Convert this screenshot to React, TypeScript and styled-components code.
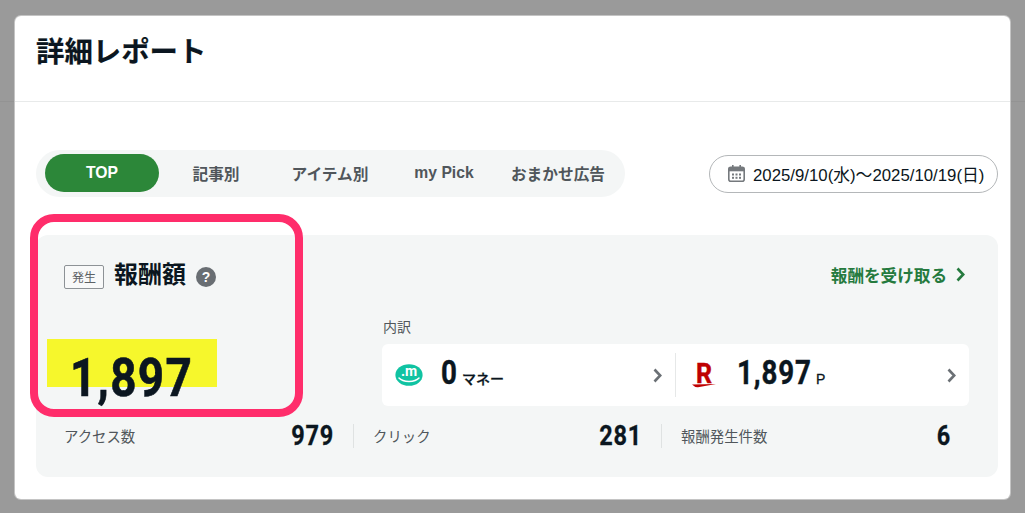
import React from "react";
import styled, { createGlobalStyle } from "styled-components";

const JP = `"Liberation Sans", "Noto Sans CJK JP", sans-serif`;
const NUM = `Roboto, "Liberation Sans", sans-serif`;

const Global = createGlobalStyle`
  html, body { margin: 0; padding: 0; }
  body { font-family: ${JP}; background: #9a9a9a; }
`;

const Page = styled.div`
  position: relative;
  width: 1025px;
  height: 513px;
  padding: 16px 15px 14px 15px;
  box-sizing: border-box;
  background: #9a9a9a;
  overflow: hidden;
  &::before {
    content: "";
    position: absolute;
    left: 0;
    right: 0;
    top: 101px;
    height: 1px;
    background: #939393;
  }
`;

const Card = styled.div`
  position: relative;
  height: 483px;
  background: #fff;
  border-radius: 6px;
  box-shadow: 0 0 0 1px #c4c4c4;
`;

const Header = styled.header`
  height: 86px;
  box-sizing: border-box;
  border-bottom: 1px solid #e8eaea;
  padding: 16px 0 0 21px;
`;

const Title = styled.h1`
  margin: 0;
  font-size: 28.4px;
  line-height: 40px;
  font-weight: 700;
  color: #0b1620;
  -webkit-text-stroke: 0.2px #0b1620;
`;

const Content = styled.div`
  padding: 48px 12px 0 21px;
`;

const TopRow = styled.div`
  display: flex;
  justify-content: space-between;
  align-items: center;
`;

const Tabs = styled.nav`
  display: flex;
  height: 47px;
  box-sizing: border-box;
  padding: 4px 10px 5px 9px;
  background: #f4f6f6;
  border-radius: 24px;
`;

const Tab = styled.div<{ $active?: boolean }>`
  width: 114px;
  display: flex;
  align-items: center;
  justify-content: center;
  box-sizing: border-box;
  border-radius: 19px;
  font-size: 15.7px;
  font-weight: 700;
  white-space: nowrap;
  color: ${(p) => (p.$active ? "#fff" : "#50565b")};
  background: ${(p) => (p.$active ? "#2c8739" : "transparent")};
`;

const DatePill = styled.div`
  display: flex;
  align-items: center;
  gap: 8px;
  width: 289px;
  height: 38px;
  box-sizing: border-box;
  padding-left: 18px;
  border: 1px solid #b4b7b9;
  border-radius: 19px;
  font-size: 16.8px;
  color: #0b1620;
  white-space: nowrap;
`;

const Panel = styled.section`
  position: relative;
  margin-top: 38px;
  height: 242px;
  box-sizing: border-box;
  padding: 29px 29px 0 28px;
  background: #f4f6f6;
  border-radius: 12px;
`;

const PanelHead = styled.div`
  display: flex;
  align-items: center;
  justify-content: space-between;
  height: 25px;
`;

const HeadLeft = styled.div`
  display: flex;
  align-items: center;
`;

const Badge = styled.span`
  width: 40px;
  height: 24px;
  box-sizing: border-box;
  display: flex;
  align-items: center;
  justify-content: center;
  border: 1px solid #8d9296;
  border-radius: 2px;
  background: #f8f9f9;
  font-size: 12px;
  color: #5d6266;
`;

const PanelTitle = styled.h2`
  margin: 0 0 4px 10px;
  font-size: 24px;
  line-height: 30px;
  font-weight: 700;
  color: #0b1620;
`;

const Help = styled.span`
  width: 20px;
  height: 20px;
  margin-left: 10px;
  border-radius: 50%;
  background: #696e73;
  color: #fff;
  font-size: 14px;
  font-weight: 700;
  display: flex;
  align-items: center;
  justify-content: center;
`;

const ReceiveLink = styled.a`
  display: flex;
  align-items: center;
  gap: 9px;
  margin: 0 4px 4px 0;
  font-size: 16.6px;
  font-weight: 700;
  color: #257a3e;
`;

const Middle = styled.div`
  display: flex;
  margin-top: 30px;
  height: 95px;
`;

const TotalBox = styled.div`
  position: relative;
  width: 318px;
  flex: none;
`;

const Highlight = styled.div`
  position: absolute;
  left: -17px;
  top: 20px;
  width: 170px;
  height: 48px;
  background: #f6f72c;
`;

const BigNumber = styled.span`
  position: absolute;
  left: 6px;
  top: 30px;
  font-family: ${NUM};
  font-size: 54px;
  line-height: 57px;
  font-weight: 700;
  letter-spacing: 1.5px;
  color: #0b1620;
  -webkit-text-stroke: 0.6px #0b1620;
  transform: scaleX(0.85);
  transform-origin: left center;
`;

const Breakdown = styled.div`
  flex: 1;
`;

const BreakdownLabel = styled.div`
  font-size: 14px;
  line-height: 16px;
  height: 25px;
  padding-left: 1px;
  color: #50565b;
`;

const BreakdownCard = styled.div`
  display: flex;
  align-items: center;
  height: 62px;
  background: #fff;
  border-radius: 6px;
`;

const BreakdownItem = styled.div<{ $first?: boolean }>`
  flex: none;
  width: ${(p) => (p.$first ? "294px" : "293px")};
  height: 44px;
  box-sizing: border-box;
  display: flex;
  align-items: center;
  padding: ${(p) => (p.$first ? "0 13px 0 13px" : "0 13px 0 16px")};
  border-right: ${(p) => (p.$first ? "1px solid #e6e8e8" : "none")};
`;

const ItemValue = styled.div<{ $w: number }>`
  display: flex;
  align-items: baseline;
  flex: 1;
  margin-left: ${(p) => p.$w}px;
  margin-bottom: 4px;
`;

const PointNumber = styled.span<{ $w: number }>`
  display: inline-block;
  width: ${(p) => p.$w}px;
  font-family: ${NUM};
  font-size: 33px;
  line-height: 36px;
  font-weight: 700;
  letter-spacing: 1px;
  color: #0b1620;
  -webkit-text-stroke: 0.4px #0b1620;
  white-space: nowrap;
  transform: scaleX(0.84);
  transform-origin: left center;
`;

const Unit = styled.span`
  margin-left: 6px;
  font-size: 14px;
  font-weight: 500;
  color: #0b1620;
  -webkit-text-stroke: 0.3px #0b1620;
`;

const Stats = styled.div`
  display: grid;
  grid-template-columns: 290px 308px 308px;
  margin-top: 10px;
`;

const Stat = styled.div<{ $last?: boolean }>`
  display: flex;
  align-items: center;
  justify-content: space-between;
  height: 24px;
  box-sizing: border-box;
  padding-right: 19px;
  border-right: ${(p) => (p.$last ? "none" : "1px solid #dfe2e2")};
  & + & { padding-left: 19px; }
`;

const StatLabel = styled.span`
  margin-bottom: 2px;
  font-size: 14.4px;
  font-weight: 400;
  color: #50565b;
`;

const StatValue = styled.span`
  font-family: ${NUM};
  font-size: 28px;
  line-height: 24px;
  font-weight: 700;
  letter-spacing: 1px;
  color: #0b1620;
  -webkit-text-stroke: 0.3px #0b1620;
  transform: scaleX(0.84);
  transform-origin: right center;
`;

const Annotation = styled.div`
  position: absolute;
  left: 15px;
  top: 198px;
  width: 273px;
  height: 203px;
  box-sizing: border-box;
  border: 8px solid #ff2d6b;
  border-radius: 24px;
`;

const CalendarIcon = () => (
  <svg width="17" height="17" viewBox="0 0 17 17" style={{ flex: "none" }}>
    <rect x="0.8" y="2.3" width="15.4" height="13.9" rx="2" fill="#fff" stroke="#75797d" strokeWidth="1.6" />
    <rect x="0.8" y="2.3" width="15.4" height="4" fill="#75797d" />
    <rect x="4" y="0" width="1.6" height="3.5" fill="#75797d" />
    <rect x="11.4" y="0" width="1.6" height="3.5" fill="#75797d" />
    {[4, 7.5, 11].map((x) =>
      [8.5, 11.8].map((y) => <rect key={`${x}-${y}`} x={x} y={y} width="2" height="2" fill="#75797d" />)
    )}
  </svg>
);

const Chevron = ({ color, w = 9, h = 15 }: { color: string; w?: number; h?: number }) => (
  <svg width={w} height={h} viewBox="0 0 9 15" style={{ flex: "none" }}>
    <path d="M1.5 1.5 L7.2 7.5 L1.5 13.5" fill="none" stroke={color} strokeWidth="2.6" />
  </svg>
);

const MoneyIcon = () => (
  <svg width="28" height="22" viewBox="0 0 28 22" style={{ flex: "none" }}>
    <ellipse cx="14" cy="11" rx="13.6" ry="10.8" fill="#10c3a2" />
    <text x="14" y="12" textAnchor="middle" fontFamily="Roboto, sans-serif" fontWeight="700" fontSize="14" fill="#fff">.m</text>
    <path d="M4 14 C8 18.5 20 18.5 24 14" fill="none" stroke="#fff" strokeWidth="1.5" strokeLinecap="round" />
  </svg>
);

const RakutenIcon = () => (
  <svg width="24" height="27" viewBox="0 0 24 27" style={{ flex: "none", overflow: "visible" }}>
    <text x="4" y="20.5" fontFamily="Roboto, sans-serif" fontWeight="700" fontSize="28" textLength="16" lengthAdjust="spacingAndGlyphs" fill="#bf0000" stroke="#bf0000" strokeWidth="0.5">R</text>
    <path d="M0 22.5 L24 22 L6 25.2 Q3 25.5 0 22.5 Z" fill="#bf0000" />
  </svg>
);

export default function App() {
  return (
    <Page>
      <Global />
      <Card>
        <Header>
          <Title>詳細レポート</Title>
        </Header>
        <Content>
          <TopRow>
            <Tabs>
              <Tab $active>TOP</Tab>
              <Tab>記事別</Tab>
              <Tab>アイテム別</Tab>
              <Tab>my Pick</Tab>
              <Tab>おまかせ広告</Tab>
            </Tabs>
            <DatePill>
              <CalendarIcon />
              2025/9/10(水)～2025/10/19(日)
            </DatePill>
          </TopRow>
          <Panel>
            <PanelHead>
              <HeadLeft>
                <Badge>発生</Badge>
                <PanelTitle>報酬額</PanelTitle>
                <Help>?</Help>
              </HeadLeft>
              <ReceiveLink>
                報酬を受け取る
                <Chevron color="#257a3e" />
              </ReceiveLink>
            </PanelHead>
            <Middle>
              <TotalBox>
                <Highlight />
                <BigNumber>1,897</BigNumber>
              </TotalBox>
              <Breakdown>
                <BreakdownLabel>内訳</BreakdownLabel>
                <BreakdownCard>
                  <BreakdownItem $first>
                    <MoneyIcon />
                    <ItemValue $w={18}>
                      <PointNumber $w={15}>0</PointNumber>
                      <Unit>マネー</Unit>
                    </ItemValue>
                    <Chevron color="#6b7075" />
                  </BreakdownItem>
                  <BreakdownItem>
                    <RakutenIcon />
                    <ItemValue $w={21}>
                      <PointNumber $w={73}>1,897</PointNumber>
                      <Unit>P</Unit>
                    </ItemValue>
                    <Chevron color="#6b7075" />
                  </BreakdownItem>
                </BreakdownCard>
              </Breakdown>
            </Middle>
            <Stats>
              <Stat>
                <StatLabel>アクセス数</StatLabel>
                <StatValue>979</StatValue>
              </Stat>
              <Stat>
                <StatLabel>クリック</StatLabel>
                <StatValue>281</StatValue>
              </Stat>
              <Stat $last>
                <StatLabel>報酬発生件数</StatLabel>
                <StatValue>6</StatValue>
              </Stat>
            </Stats>
          </Panel>
        </Content>
        <Annotation />
      </Card>
    </Page>
  );
}
